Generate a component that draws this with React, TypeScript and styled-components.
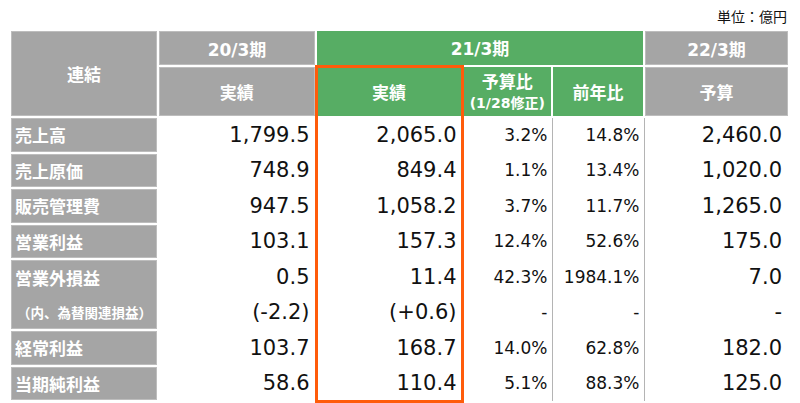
import styled, { createGlobalStyle, css } from 'styled-components';

const GRAY = '#a5a5a5';
const GREEN = '#57ad64';
const ORANGE = '#ff5c0a';
const RULE = '#b4b4b4';
const SEAM = '#d9c7d6';

const Global = createGlobalStyle`
    html, body {
        margin: 0;
        padding: 0;
        background: #fff;
    }
    body {
        font-family: "DejaVu Sans", "Noto Sans CJK JP", sans-serif;
    }
`;

const Page = styled.div`
    width: 800px;
    height: 403px;
    overflow: hidden;
    padding: 0 12px 0 11px;
    box-sizing: border-box;
`;

const Unit = styled.div`
    height: 31px;
    display: flex;
    align-items: center;
    justify-content: flex-end;
    padding-right: 1px;
    font-family: "Noto Sans CJK JP", sans-serif;
    font-size: 14px;
    color: #111;
`;

const Table = styled.table`
    width: 777px;
    border-collapse: collapse;
    table-layout: fixed;
`;

const Col = styled.col<{ $w: number }>`
    width: ${(p) => p.$w}px;
`;

const HeadRow = styled.tr<{ $h: number }>`
    height: ${(p) => p.$h}px;
`;

type Edge = 'top' | 'left' | 'right';

const Head = styled.th<{ $tone: 'gray' | 'green'; $boxed?: boolean; $open?: Edge[]; $seam?: boolean }>`
    background: ${(p) => (p.$tone === 'gray' ? GRAY : GREEN)};
    color: #fff;
    font-family: "DejaVu Sans", "Noto Sans CJK JP", sans-serif;
    font-weight: 700;
    font-size: 17px;
    text-align: center;
    vertical-align: middle;
    padding: 0;
    border: 2px solid #fff;
    box-shadow: ${(p) => (p.$tone === 'gray' ? 'inset 0 0 0 1px #bdbdbd' : 'none')};
    ${(p) => p.$open?.includes('top') && css`border-top: none;`}
    ${(p) => p.$open?.includes('left') && css`border-left: none;`}
    ${(p) => p.$open?.includes('right') && css`border-right: none;`}
    ${(p) => p.$seam && css`border-left: 1px solid ${SEAM};`}
    ${(p) =>
        p.$boxed &&
        css`
            border-top: 3px solid ${ORANGE};
            border-left: 3px solid ${ORANGE};
            border-right: 3px solid ${ORANGE};
        `}
`;

const HeadJa = styled.span`
    font-family: "Noto Sans CJK JP", sans-serif;
    font-size: 17px;
`;

const HeadLine = styled.span<{ $small?: boolean }>`
    display: block;
    font-family: "DejaVu Sans", "Noto Sans CJK JP", sans-serif;
    font-size: ${(p) => (p.$small ? '14px' : '17px')};
    line-height: ${(p) => (p.$small ? '20px' : '22px')};
`;

const Label = styled.th`
    background: ${GRAY};
    color: #fff;
    font-family: "Noto Sans CJK JP", sans-serif;
    font-weight: 700;
    font-size: 17px;
    text-align: left;
    padding: 0 0 0 4px;
    height: 33.5px;
    border: 2px solid #fff;
    border-left: none;
    box-shadow: inset 0 0 0 1px #bdbdbd;
`;

const LabelStack = styled.div`
    display: flex;
    flex-direction: column;
`;

const LabelLine = styled.div<{ $small?: boolean }>`
    height: 34.5px;
    display: flex;
    align-items: center;
    font-size: ${(p) => (p.$small ? '13.5px' : '17px')};
    padding-left: ${(p) => (p.$small ? '2px' : '0')};
`;

const Cell = styled.td<{ $pct?: boolean; $boxed?: boolean; $last?: boolean; $rule?: boolean; $pad: number }>`
    font-family: "DejaVu Sans", sans-serif;
    font-size: ${(p) => (p.$pct ? '17px' : '21px')};
    color: #111;
    text-align: right;
    padding: 0 ${(p) => p.$pad}px 0 0;
    height: 33.5px;
    white-space: nowrap;
    ${(p) => p.$rule && css`border-left: 1px solid ${RULE};`}
    ${(p) =>
        p.$boxed &&
        css`
            border-left: 3px solid ${ORANGE};
            border-right: 3px solid ${ORANGE};
        `}
    ${(p) => p.$boxed && p.$last && css`border-bottom: 3px solid ${ORANGE};`}
`;

type Row = { label: string; v: [string, string, string, string, string] };

const rows: Row[] = [
    { label: '売上高', v: ['1,799.5', '2,065.0', '3.2%', '14.8%', '2,460.0'] },
    { label: '売上原価', v: ['748.9', '849.4', '1.1%', '13.4%', '1,020.0'] },
    { label: '販売管理費', v: ['947.5', '1,058.2', '3.7%', '11.7%', '1,265.0'] },
    { label: '営業利益', v: ['103.1', '157.3', '12.4%', '52.6%', '175.0'] },
    { label: '営業外損益', v: ['0.5', '11.4', '42.3%', '1984.1%', '7.0'] },
    { label: '（内、為替関連損益）', v: ['(-2.2)', '(+0.6)', '-', '-', '-'] },
    { label: '経常利益', v: ['103.7', '168.7', '14.0%', '62.8%', '182.0'] },
    { label: '当期純利益', v: ['58.6', '110.4', '5.1%', '88.3%', '125.0'] },
];

function Values({ v, last }: { v: Row['v']; last: boolean }) {
    return (
        <>
            <Cell $pad={5}>{v[0]}</Cell>
            <Cell $boxed $last={last} $pad={4}>{v[1]}</Cell>
            <Cell $pct $pad={4}>{v[2]}</Cell>
            <Cell $pct $rule $pad={4}>{v[3]}</Cell>
            <Cell $rule $pad={6}>{v[4]}</Cell>
        </>
    );
}

export default function App() {
    return (
        <Page>
            <Global />
            <Unit>単位：億円</Unit>
            <Table>
                <colgroup>
                    <Col $w={147} />
                    <Col $w={158} />
                    <Col $w={146} />
                    <Col $w={90} />
                    <Col $w={92} />
                    <Col $w={144} />
                </colgroup>
                <thead>
                    <HeadRow $h={35}>
                        <Head $tone="gray" rowSpan={2} $open={['top', 'left']}>
                            <HeadJa>連結</HeadJa>
                        </Head>
                        <Head $tone="gray" $open={['top']}>20/3期</Head>
                        <Head $tone="green" colSpan={3} $open={['top']}>21/3期</Head>
                        <Head $tone="gray" $open={['top', 'right']}>22/3期</Head>
                    </HeadRow>
                    <HeadRow $h={51}>
                        <Head $tone="gray"><HeadJa>実績</HeadJa></Head>
                        <Head $tone="green" $boxed><HeadJa>実績</HeadJa></Head>
                        <Head $tone="green">
                            <HeadLine>予算比</HeadLine>
                            <HeadLine $small>(1/28修正)</HeadLine>
                        </Head>
                        <Head $tone="green" $seam><HeadJa>前年比</HeadJa></Head>
                        <Head $tone="gray" $seam $open={['right']}><HeadJa>予算</HeadJa></Head>
                    </HeadRow>
                </thead>
                <tbody>
                    {rows.map((r, i) => {
                        if (i === 5) {
                            return (
                                <tr key={r.label}>
                                    <Values v={r.v} last={false} />
                                </tr>
                            );
                        }
                        return (
                            <tr key={r.label}>
                                {i === 4 ? (
                                    <Label rowSpan={2}>
                                        <LabelStack>
                                            <LabelLine>{r.label}</LabelLine>
                                            <LabelLine $small>{rows[5].label}</LabelLine>
                                        </LabelStack>
                                    </Label>
                                ) : (
                                    <Label>{r.label}</Label>
                                )}
                                <Values v={r.v} last={i === rows.length - 1} />
                            </tr>
                        );
                    })}
                </tbody>
            </Table>
        </Page>
    );
}
